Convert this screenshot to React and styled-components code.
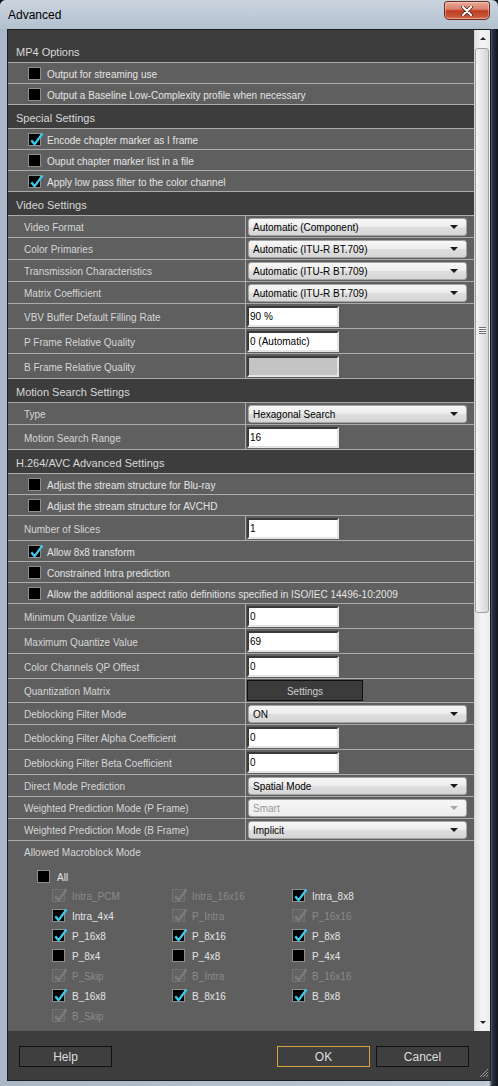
import React from "react";
import styled, { createGlobalStyle } from "styled-components";

const FONT = `"Liberation Sans", Arial, sans-serif`;

const GlobalStyle = createGlobalStyle`
  html, body { margin: 0; padding: 0; }
  body { background: #0f151c; font-family: ${FONT}; }
  * { box-sizing: border-box; }
`;

const Window = styled.div`
  width: 498px;
  height: 1086px;
  display: flex;
  flex-direction: column;
  background: linear-gradient(90deg, #a9b7c6 0px, #bcc8d5 484px, #c8d2dd 489px, #2c3644 492px, #0e141b 498px);
  border-radius: 6px 6px 0 0;
  overflow: hidden;
  font-family: ${FONT};
`;

const TitleBar = styled.div`
  height: 29px;
  flex: none;
  display: flex;
  align-items: flex-start;
  padding-left: 8px;
  background: linear-gradient(180deg, #cbd5e0 0%, #bdc9d6 55%, #b3c1cf 100%);
`;

const Title = styled.div`
  font-size: 12px;
  line-height: 12px;
  color: #000;
  margin-top: 9px;
`;

const CloseButton = styled.div`
  margin-left: auto;
  margin-right: 8px;
  width: 46px;
  height: 19px;
  margin-top: 1px;
  border: 1px solid #6e2a1e;
  border-radius: 3px 3px 5px 5px;
  background: linear-gradient(180deg, #e9a999 0%, #d8806d 42%, #c13c22 52%, #c6553a 85%, #d77a5e 100%);
  display: flex;
  align-items: center;
  justify-content: center;
  box-shadow: inset 0 0 0 1px rgba(255, 255, 255, 0.35);
`;

const Client = styled.div`
  flex: 1;
  margin: 0 7px 5px 7px;
  border: 1px solid #1b1f24;
  display: flex;
  flex-direction: column;
  background: #3d3d3d;
`;

const ScrollArea = styled.div`
  height: 1001px;
  flex: none;
  display: flex;
`;

const Panel = styled.div`
  flex: 1;
  display: flex;
  flex-direction: column;
  background: #3d3d3d;
  padding-top: 9px;
  overflow: hidden;
`;

const SectionHeader = styled.div`
  height: 24px;
  flex: none;
  display: flex;
  align-items: center;
  padding: 2px 0 0 8px;
  font-size: 11px;
  color: #d8d8d8;
  background: #3d3d3d;
  border-bottom: 1px solid #ababab;
`;

const CheckRow = styled.div`
  height: 21px;
  flex: none;
  display: flex;
  align-items: center;
  gap: 6px;
  padding-left: 20px;
  background: #5f5f5f;
  border-bottom: 1px solid #ababab;
  font-size: 10px;
  color: #e4e4e4;
`;

const LabelText = styled.span`
  padding-top: 2px;
`;

const FieldRow = styled.div`
  height: ${(p) => p.$h}px;
  flex: none;
  display: grid;
  grid-template-columns: 238px 1fr;
  background: #5f5f5f;
  border-bottom: 1px solid #ababab;
`;

const FieldLabel = styled.div`
  display: flex;
  align-items: center;
  padding: 2px 0 0 16px;
  border-right: 1px solid #ababab;
  font-size: 10px;
  color: #d6d6d6;
`;

const FieldControl = styled.div`
  display: flex;
  align-items: center;
  padding-left: ${(p) => (p.$select ? 2 : 1)}px;
`;

const SelectBox = styled.div`
  width: 219px;
  height: 18px;
  border: 1px solid #a3a3a3;
  border-radius: 3px;
  background: ${(p) =>
    p.$disabled
      ? "linear-gradient(180deg, #f6f6f6, #ececec)"
      : "linear-gradient(180deg, #f7f7f7 0%, #ececec 50%, #dedede 51%, #d6d6d6 100%)"};
  display: flex;
  align-items: center;
  padding: 1px 8px 0 4px;
  font-size: 10px;
  color: ${(p) => (p.$disabled ? "#9a9a9a" : "#000")};
`;

const SelectText = styled.span`
  flex: 1;
`;

const Arrow = styled.span`
  width: 0;
  height: 0;
  border-left: 4px solid transparent;
  border-right: 4px solid transparent;
  border-top: 4px solid ${(p) => (p.$disabled ? "#a8a8a8" : "#1a1a1a")};
`;

const InputBox = styled.div`
  width: 92px;
  height: 21px;
  border: 2px solid;
  border-color: #3a3a3a #e4e4e4 #e4e4e4 #3a3a3a;
  background: ${(p) => (p.$disabled ? "#c4c4c4" : "#fff")};
  display: flex;
  align-items: center;
  padding: 1px 0 0 1px;
  font-size: 10px;
  color: #000;
`;

const PanelButton = styled.div`
  width: 116px;
  height: 21px;
  background: #3b3b3b;
  border: 1px solid #101010;
  display: flex;
  align-items: center;
  justify-content: center;
  padding-top: 1px;
  font-size: 10px;
  color: #cfcfcf;
`;

const BoxWrap = styled.span`
  position: relative;
  width: 13px;
  height: 13px;
  flex: none;
  border: 1px solid ${(p) => (p.$disabled ? "#717171" : "#8e8e8e")};
  background: ${(p) => (p.$disabled ? "#646464" : "#000")};
`;

const CheckSvg = styled.svg`
  position: absolute;
  left: -1px;
  top: -3px;
  overflow: visible;
`;

const MacroSection = styled.div`
  flex: 1;
  background: #5f5f5f;
`;

const MacroTitle = styled.div`
  height: 22px;
  display: flex;
  align-items: center;
  padding-left: 16px;
  font-size: 10px;
  color: #d6d6d6;
`;

const AllRow = styled.div`
  margin-top: 4px;
  height: 18px;
  display: flex;
  align-items: center;
  gap: 7px;
  padding-left: 29px;
  font-size: 10px;
  color: #e4e4e4;
`;

const MacroGrid = styled.div`
  display: grid;
  grid-template-columns: repeat(3, 120px);
  grid-auto-rows: 20px;
  padding-left: 44px;
`;

const MacroItem = styled.div`
  display: flex;
  align-items: center;
  gap: 7px;
  font-size: 10px;
  color: ${(p) => (p.$disabled ? "#8a8a8a" : "#e4e4e4")};
`;

const ScrollBar = styled.div`
  width: 16px;
  flex: none;
  display: flex;
  flex-direction: column;
  background: linear-gradient(90deg, #e2e2e2 0%, #f4f4f4 45%, #ececec 100%);
  border-left: 1px solid #d2d2d2;
`;

const ScrollArrow = styled.div`
  height: 17px;
  flex: none;
  display: flex;
  align-items: center;
  justify-content: center;
  &::after {
    content: "";
    border-left: 3px solid transparent;
    border-right: 3px solid transparent;
    ${(p) => (p.$down ? "border-top: 3px solid #222;" : "border-bottom: 3px solid #222;")}
  }
`;

const Track = styled.div`
  flex: 1;
`;

const Thumb = styled.div`
  margin: 1px 1px 0 0;
  height: 565px;
  border: 1px solid #a0a0a0;
  border-radius: 3px;
  background: linear-gradient(90deg, #f4f4f4 0%, #e6e6e6 50%, #d5d5d5 100%);
  display: flex;
  align-items: center;
  justify-content: center;
`;

const Grip = styled.div`
  width: 7px;
  height: 7px;
  background: repeating-linear-gradient(180deg, #6f6f6f 0 1px, #fafafa 1px 2px);
`;

const Footer = styled.div`
  flex: 1;
  position: relative;
  display: flex;
  align-items: flex-start;
  gap: 6px;
  padding: 15px 21px 0 11px;
  background: #3d3d3d;
`;

const Spacer = styled.div`
  flex: 1;
`;

const DialogButton = styled.div`
  width: 93px;
  height: 21px;
  display: flex;
  align-items: center;
  justify-content: center;
  padding-top: 1px;
  background: #3f3f3f;
  border: 1px solid ${(p) => (p.$default ? "#d6a33a" : "#111")};
  color: #dedede;
  font-size: 12px;
`;

const ResizeGrip = styled.svg`
  position: absolute;
  right: 1px;
  bottom: 2px;
`;

function Checkbox({ checked, disabled }) {
  return (
    <BoxWrap $disabled={disabled}>
      {checked && (
        <CheckSvg width="16" height="16" viewBox="-1 -3 16 16">
          <path
            d="M2.3 6.4 L5.6 10.2 L13.6 -0.6"
            fill="none"
            stroke={disabled ? "#7b7b7b" : "#3cc8e8"}
            strokeWidth="2.4"
            strokeLinejoin="miter"
          />
        </CheckSvg>
      )}
    </BoxWrap>
  );
}

function Select({ value, disabled }) {
  return (
    <SelectBox $disabled={disabled}>
      <SelectText>{value}</SelectText>
      <Arrow $disabled={disabled} />
    </SelectBox>
  );
}

const H = { select: 22, input: 25, button: 24 };

function Field({ label, type, value, disabled }) {
  return (
    <FieldRow $h={H[type]}>
      <FieldLabel>{label}</FieldLabel>
      <FieldControl $select={type === "select"}>
        {type === "select" && <Select value={value} disabled={disabled} />}
        {type === "input" && <InputBox $disabled={disabled}>{value}</InputBox>}
        {type === "button" && <PanelButton>{value}</PanelButton>}
      </FieldControl>
    </FieldRow>
  );
}

function Check({ label, checked }) {
  return (
    <CheckRow>
      <Checkbox checked={checked} />
      <LabelText>{label}</LabelText>
    </CheckRow>
  );
}

const sections = [
  { h: "MP4 Options" },
  { c: "Output for streaming use" },
  { c: "Output a Baseline Low-Complexity profile when necessary" },
  { h: "Special Settings" },
  { c: "Encode chapter marker as I frame", on: true },
  { c: "Ouput chapter marker list in a file" },
  { c: "Apply low pass filter to the color channel", on: true },
  { h: "Video Settings" },
  { f: "Video Format", t: "select", v: "Automatic (Component)" },
  { f: "Color Primaries", t: "select", v: "Automatic (ITU-R BT.709)" },
  { f: "Transmission Characteristics", t: "select", v: "Automatic (ITU-R BT.709)" },
  { f: "Matrix Coefficient", t: "select", v: "Automatic (ITU-R BT.709)" },
  { f: "VBV Buffer Default Filling Rate", t: "input", v: "90 %" },
  { f: "P Frame Relative Quality", t: "input", v: "0 (Automatic)" },
  { f: "B Frame Relative Quality", t: "input", v: "", d: true },
  { h: "Motion Search Settings" },
  { f: "Type", t: "select", v: "Hexagonal Search" },
  { f: "Motion Search Range", t: "input", v: "16" },
  { h: "H.264/AVC Advanced Settings" },
  { c: "Adjust the stream structure for Blu-ray" },
  { c: "Adjust the stream structure for AVCHD" },
  { f: "Number of Slices", t: "input", v: "1" },
  { c: "Allow 8x8 transform", on: true },
  { c: "Constrained Intra prediction" },
  { c: "Allow the additional aspect ratio definitions specified in ISO/IEC 14496-10:2009" },
  { f: "Minimum Quantize Value", t: "input", v: "0" },
  { f: "Maximum Quantize Value", t: "input", v: "69" },
  { f: "Color Channels QP Offest", t: "input", v: "0" },
  { f: "Quantization Matrix", t: "button", v: "Settings" },
  { f: "Deblocking Filter Mode", t: "select", v: "ON" },
  { f: "Deblocking Filter Alpha Coefficient", t: "input", v: "0" },
  { f: "Deblocking Filter Beta Coefficient", t: "input", v: "0" },
  { f: "Direct Mode Prediction", t: "select", v: "Spatial Mode" },
  { f: "Weighted Prediction Mode (P Frame)", t: "select", v: "Smart", d: true },
  { f: "Weighted Prediction Mode (B Frame)", t: "select", v: "Implicit" },
];

// state: 0 unchecked, 1 checked, 2 disabled checked
const macro = [
  ["Intra_PCM", 2], ["Intra_16x16", 2], ["Intra_8x8", 1],
  ["Intra_4x4", 1], ["P_Intra", 2], ["P_16x16", 2],
  ["P_16x8", 1], ["P_8x16", 1], ["P_8x8", 1],
  ["P_8x4", 0], ["P_4x8", 0], ["P_4x4", 0],
  ["P_Skip", 2], ["B_Intra", 2], ["B_16x16", 2],
  ["B_16x8", 1], ["B_8x16", 1], ["B_8x8", 1],
  ["B_Skip", 2],
];

export default function App() {
  return (
    <>
      <GlobalStyle />
      <Window>
        <TitleBar>
          <Title>Advanced</Title>
          <CloseButton>
            <svg width="12" height="10" viewBox="0 0 12 10">
              <path d="M2 1 L10 9 M10 1 L2 9" stroke="#4a1a12" strokeWidth="3.6" strokeLinecap="round" />
              <path d="M2 1 L10 9 M10 1 L2 9" stroke="#ffffff" strokeWidth="2.2" strokeLinecap="round" />
            </svg>
          </CloseButton>
        </TitleBar>
        <Client>
          <ScrollArea>
            <Panel>
              {sections.map((s, i) => {
                if (s.h) return <SectionHeader key={i}>{s.h}</SectionHeader>;
                if (s.c) return <Check key={i} label={s.c} checked={s.on} />;
                return <Field key={i} label={s.f} type={s.t} value={s.v} disabled={s.d} />;
              })}
              <MacroSection>
                <MacroTitle>Allowed Macroblock Mode</MacroTitle>
                <AllRow>
                  <Checkbox />
                  <LabelText>All</LabelText>
                </AllRow>
                <MacroGrid>
                  {macro.map(([name, st]) => (
                    <MacroItem key={name} $disabled={st === 2}>
                      <Checkbox checked={st > 0} disabled={st === 2} />
                      <LabelText>{name}</LabelText>
                    </MacroItem>
                  ))}
                </MacroGrid>
              </MacroSection>
            </Panel>
            <ScrollBar>
              <ScrollArrow />
              <Track>
                <Thumb>
                  <Grip />
                </Thumb>
              </Track>
              <ScrollArrow $down />
            </ScrollBar>
          </ScrollArea>
          <Footer>
            <DialogButton>Help</DialogButton>
            <Spacer />
            <DialogButton $default>OK</DialogButton>
            <DialogButton>Cancel</DialogButton>
            <ResizeGrip width="12" height="12" viewBox="0 0 12 12">
              <path d="M11 3 L3 11 M11 6 L6 11 M11 9 L9 11" stroke="#9a9a9a" strokeWidth="1" />
            </ResizeGrip>
          </Footer>
        </Client>
      </Window>
    </>
  );
}
